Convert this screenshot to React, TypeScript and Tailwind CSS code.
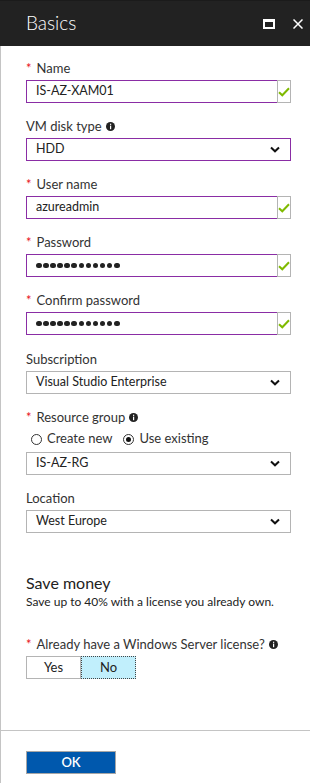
import React from "react";

const font = { fontFamily: 'Lato, "Open Sans", sans-serif' };

function Req() {
  return <span className="text-[#e81123] mr-[5px] text-[13px]">*</span>;
}

function Info() {
  return (
    <svg width="9" height="9" viewBox="0 0 9 9" className="inline-block ml-[4px] shrink-0">
      <circle cx="4.5" cy="4.5" r="4.5" fill="#222" />
      <rect x="4" y="3.6" width="1.2" height="3.6" fill="#fff" />
      <rect x="4" y="1.7" width="1.2" height="1.2" fill="#fff" />
    </svg>
  );
}

function Check() {
  return (
    <svg width="12" height="10" viewBox="0 0 12 10">
      <path d="M1 5.2 L4.3 8.3 L11 1.3" stroke="#7fba00" strokeWidth="2" fill="none" />
    </svg>
  );
}

function Chevron() {
  return (
    <svg width="10" height="7" viewBox="0 0 10 7">
      <path d="M1 1.5 L5 5.3 L9 1.5" stroke="#111" strokeWidth="2" fill="none" />
    </svg>
  );
}

function Label({ children, req, info, mb = "mb-[3px]" }: { children: React.ReactNode; req?: boolean; info?: boolean; mb?: string }) {
  return (
    <div className={`h-[17px] leading-[17px] text-[13px] text-[#333] flex items-center whitespace-nowrap ${mb}`}>
      {req && <Req />}
      <span>{children}</span>
      {info && <Info />}
    </div>
  );
}

function ValidInput({ children }: { children: React.ReactNode }) {
  return (
    <div className="flex h-[23px]">
      <div className="flex-1 border border-r-0 border-[#8a2da5] flex items-center pl-[9px] text-[12.5px] text-[#222]">
        {children}
      </div>
      <div className="w-[14px] border border-[#b4b4b4] flex items-center justify-center">
        <Check />
      </div>
    </div>
  );
}

function Select({ value, focused }: { value: string; focused?: boolean }) {
  return (
    <div
      className={`h-[23px] border ${focused ? "border-[#8a2da5]" : "border-[#b4b4b4]"} flex items-center justify-between pl-[9px] pr-[10px] text-[12.5px] text-[#222]`}
    >
      <span>{value}</span>
      <Chevron />
    </div>
  );
}

function Dots() {
  return (
    <div className="flex gap-[1.6px]">
      {Array.from({ length: 12 }).map((_, i) => (
        <span key={i} className="w-[5.5px] h-[5.5px] rounded-full bg-[#222]" />
      ))}
    </div>
  );
}

function Radio({ checked, label }: { checked?: boolean; label: string }) {
  return (
    <div className="flex items-center">
      <span className="w-[11px] h-[11px] rounded-full border border-[#333] flex items-center justify-center">
        {checked && <span className="w-[5px] h-[5px] rounded-full bg-[#111]" />}
      </span>
      <span className="ml-[5px] text-[13px] text-[#333]">{label}</span>
    </div>
  );
}

export default function App() {
  return (
    <div className="w-[310px] h-[783px] flex flex-col bg-white" style={font}>
      <div className="h-[46px] bg-[#222] flex items-center pl-[26px] pr-[7px] border-t border-[#1b1b1b]">
        <span className="text-white text-[19px] font-light flex-1">Basics</span>
        <div className="w-[12px] h-[10px] border-[2px] border-t-[3px] border-white mr-[18px]" />
        <svg width="10" height="10" viewBox="0 0 10 10">
          <path d="M0.5 0.5 L9.5 9.5 M9.5 0.5 L0.5 9.5" stroke="#fff" strokeWidth="1.5" />
        </svg>
      </div>
      <div className="flex-1 border-l border-[#c4c4c4] flex flex-col">
        <div className="flex-1 pl-[25px] pr-[19px] pt-[14px]">
          <Label req>Name</Label>
          <ValidInput>IS-AZ-XAM01</ValidInput>
          <div className="h-[15px]" />
          <Label info>VM disk type</Label>
          <Select value="HDD" focused />
          <div className="h-[15px]" />
          <Label req>User name</Label>
          <ValidInput>azureadmin</ValidInput>
          <div className="h-[15px]" />
          <Label req>Password</Label>
          <ValidInput>
            <Dots />
          </ValidInput>
          <div className="h-[15px]" />
          <Label req>Confirm password</Label>
          <ValidInput>
            <Dots />
          </ValidInput>
          <div className="h-[16px]" />
          <Label>Subscription</Label>
          <Select value="Visual Studio Enterprise" />
          <div className="h-[15px]" />
          <Label req info mb="mb-[2px]">Resource group</Label>
          <div className="h-[22px] flex items-center gap-[11px] pl-[5px]">
            <Radio label="Create new" />
            <Radio checked label="Use existing" />
          </div>
          <div className="h-[2px]" />
          <Select value="IS-AZ-RG" />
          <div className="h-[15px]" />
          <Label>Location</Label>
          <Select value="West Europe" />
          <div className="h-[40px]" />
          <div className="text-[16px] leading-[20px] text-[#222]">Save money</div>
          <div className="text-[12px] leading-[18px] text-[#222] whitespace-nowrap">Save up to 40% with a license you already own.</div>
          <div className="h-[25px]" />
          <Label req info>Already have a Windows Server license?</Label>
          <div className="flex h-[23px] w-[110px]">
            <div className="flex-1 border border-[#b4b4b4] flex items-center justify-center text-[13px] text-[#222]">
              Yes
            </div>
            <div className="flex-1 border border-dotted border-[#444] bg-[#c1effc] flex items-center justify-center text-[13px] text-[#222]">
              No
            </div>
          </div>
        </div>
        <div className="h-[53px] border-t border-[#c4c4c4] pl-[25px] pt-[20px]">
          <div className="w-[90px] h-[23px] bg-[#0058ad] border border-[#a6a6a6] flex items-center justify-center text-white text-[13px] font-semibold">
            OK
          </div>
        </div>
      </div>
    </div>
  );
}
